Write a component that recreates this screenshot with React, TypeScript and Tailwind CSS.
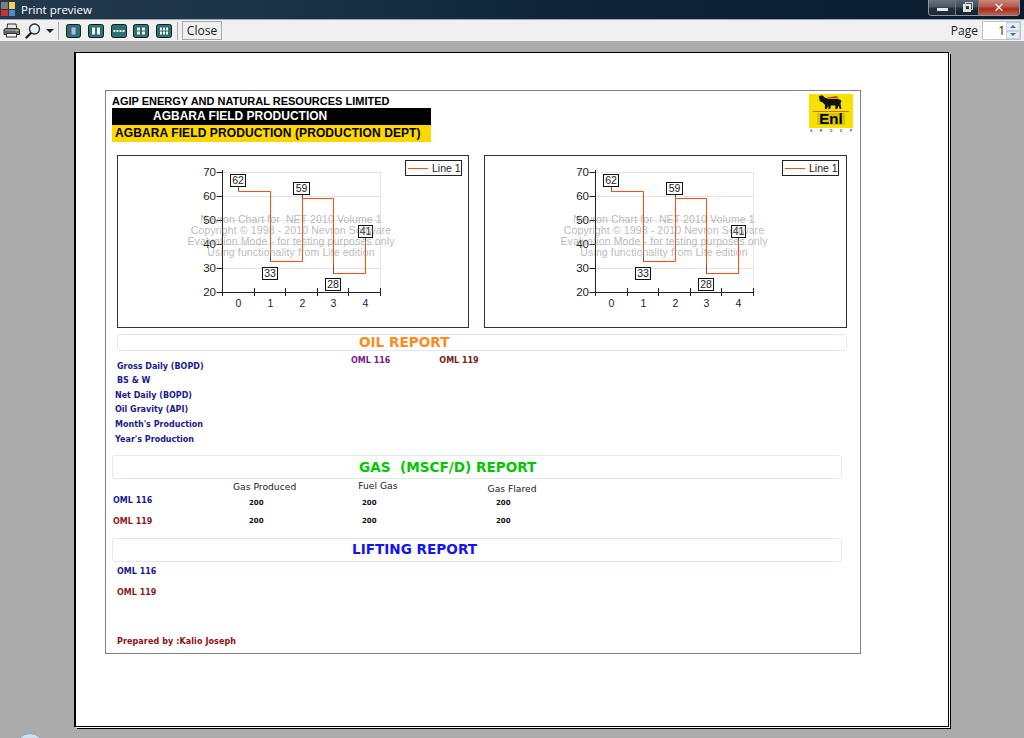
const YS = [70, 60, 50, 40, 30, 20];
const VALUES = [62, 33, 59, 28, 41];
// label box offset from the plot origin, in chart pixels
const BOXES = [
  { v: 62, x: 8.5, y: 2, w: 15 },
  { v: 33, x: 40.5, y: 95, w: 15 },
  { v: 59, x: 71.5, y: 10, w: 16 },
  { v: 28, x: 103.5, y: 106, w: 15 },
  { v: 41, x: 136.5, y: 53, w: 14 },
];

function yOf(v: number) {
  return Math.round(16 + (70 - v) * 2.4) + 0.5;
}

function Chart({ x0, width, legendX }: { x0: number; width: number; legendX: number }) {
  const xs = VALUES.map((_, i) => Math.round(x0 + 16.4 + i * 31.6) + 0.5);
  let d = `M${xs[0]} ${yOf(VALUES[0])}`;
  for (let i = 1; i < VALUES.length; i++) {
    d += ` H${xs[i]} V${yOf(VALUES[i])}`;
  }
  const left = x0 + 0.5;
  const right = x0 + 158.5;
  return (
    <div className="h-[173px] border border-[#333] bg-white" style={{ width: width + 2 }}>
      <svg width={width} height={171} className="block font-['Liberation_Sans']">
        {[70, 60, 50, 40, 30].map((v) => (
          <line key={v} x1={left} x2={right} y1={yOf(v)} y2={yOf(v)} stroke="#e4e4e4" />
        ))}
        <line x1={right} x2={right} y1={16} y2={136} stroke="#e4e4e4" />
        <path d={d} fill="none" stroke="#ff4a10" strokeWidth="1" />
        {xs.map((x, i) => (
          <line key={i} x1={x} x2={x} y1={yOf(VALUES[i]) - 8} y2={yOf(VALUES[i])} stroke="#555" />
        ))}
        <line x1={left} x2={left} y1={14} y2={136} stroke="#222" />
        <line x1={left} x2={right} y1={136.5} y2={136.5} stroke="#222" />
        {YS.map((v) => (
          <g key={v}>
            <line x1={left - 6} x2={left} y1={yOf(v)} y2={yOf(v)} stroke="#222" />
            <text x={x0 - 6} y={yOf(v) + 3} textAnchor="end" fontSize="11.5" fill="#222">
              {v}
            </text>
          </g>
        ))}
        {[0, 1, 2, 3, 4, 5].map((i) => (
          <line key={i} x1={Math.round(x0 + i * 31.6) + 0.5} x2={Math.round(x0 + i * 31.6) + 0.5} y1={132} y2={140} stroke="#222" />
        ))}
        {xs.map((x, i) => (
          <text key={i} x={x} y={151} textAnchor="middle" fontSize="10.5" fill="#224">
            {i}
          </text>
        ))}
        {BOXES.map((b) => (
          <g key={b.v}>
            <rect x={x0 + b.x} y={16.5 + b.y} width={b.w} height={12} fill="#fff" stroke="#111" />
            <text x={x0 + b.x + b.w / 2} y={16 + b.y + 10} textAnchor="middle" fontSize="10.5" fill="#222">
              {b.v}
            </text>
          </g>
        ))}
        <g fill="#8c8c8c" fillOpacity="0.62" fontSize="10.5" textAnchor="middle" letterSpacing="0.12">
          <text x={x0 + 69} y={67}>Nevron Chart for .NET 2010 Volume 1</text>
          <text x={x0 + 69} y={78}>Copyright © 1998 - 2010 Nevron Software</text>
          <text x={x0 + 69} y={89}>Evaluation Mode - for testing purposes only</text>
          <text x={x0 + 69} y={100}>Using functionality from Lite edition</text>
        </g>
        <rect x={legendX + 0.5} y={4.5} width={56} height={15} fill="#fff" stroke="#222" />
        <line x1={legendX + 3} x2={legendX + 23} y1={12.5} y2={12.5} stroke="#ff4a10" />
        <text x={legendX + 27} y={16} fontSize="10.5" fill="#222">
          Line 1
        </text>
      </svg>
    </div>
  );
}

function EniLogo() {
  return (
    <div className="w-[44px]">
      <div className="flex h-[34px] flex-col items-center bg-[#f6e200]">
        <svg width="26" height="16" viewBox="0 0 30 18" className="mt-[1px]">
          <path
            d="M1 1 L5 0 L8 3 L12 4 L23 4 L27 6 L26 10 L27 16 L25 16 L24 12 L22 16 L20 16 L20 12 L15 12 L14 16 L12 16 L12 12 L10 16 L8 16 L8 11 L5 8 L2 7 Z"
            fill="#111"
          />
          <path d="M10 3 L21 1 L24 3 L12 3.5 Z" fill="#d8352a" />
        </svg>
        <div className="h-px w-[36px] bg-[#d8682a]" />
        <div className="mt-[1px] bg-[#d4c40c] px-[2px] font-['Liberation_Sans'] text-[15px] leading-[12px] font-bold text-black">
          Enl
        </div>
      </div>
      <div className="mt-[1px] flex justify-between px-px font-['Liberation_Sans'] text-[3px] leading-[5px] font-bold text-[#333]">
        <span>G</span>
        <span>R</span>
        <span>O</span>
        <span>U</span>
        <span>P</span>
      </div>
    </div>
  );
}

function PageIcon({ cols, rows, w = 16 }: { cols: number; rows: number; w?: number }) {
  const cells = [];
  const cw = cols > 2 ? 2 : cols === 2 ? 3 : 4;
  const ch = rows > 1 ? 3 : cols > 2 ? 2 : 7;
  const gap = cols > 2 ? 1 : 2;
  const totalW = cols * cw + (cols - 1) * gap;
  const totalH = rows * ch + (rows - 1);
  for (let r = 0; r < rows; r++) {
    for (let c = 0; c < cols; c++) {
      cells.push(
        <rect
          key={`${r}-${c}`}
          x={(w - totalW) / 2 + c * (cw + gap)}
          y={(14 - totalH) / 2 + r * (ch + 1)}
          width={cw}
          height={ch}
          fill={cols === 1 ? "#b9b6e6" : "#f2f2f2"}
        />,
      );
    }
  }
  return (
    <svg width={w} height={14} viewBox={`0 0 ${w} 14`} className="block">
      <rect x="0.5" y="0.5" width={w - 1} height="13" rx="2" fill="#2e6f70" stroke="#14201f" />
      {cells}
    </svg>
  );
}

function PrinterIcon() {
  return (
    <svg width="17" height="15" viewBox="0 0 17 15" className="block">
      <path d="M4.5 1 H13 L14 6 H4 Z" fill="#e8e8e8" stroke="#333" />
      <path d="M1 7 Q1 5.5 3 5.5 H14.5 Q16.5 5.5 16.5 7.5 V11.5 H1 Z" fill="#8a8a8a" stroke="#2c2c2c" />
      <path d="M1.5 9 H16" stroke="#444" />
      <rect x="3.5" y="10.5" width="10" height="3.5" fill="#f4f4f4" stroke="#333" />
      <rect x="12.5" y="7" width="2" height="1.2" fill="#e8d44a" />
    </svg>
  );
}

function MagnifierIcon() {
  return (
    <svg width="16" height="16" viewBox="0 0 16 16" className="block">
      <path d="M6 10 L1.5 14.5" stroke="#222" strokeWidth="2.4" strokeLinecap="round" />
      <circle cx="9.5" cy="6" r="5" fill="#dff3f8" stroke="#2a2a2a" strokeWidth="1.3" />
      <path d="M7 4.5 Q8.5 2.8 10.5 3.2" stroke="#fff" strokeWidth="1.2" fill="none" />
    </svg>
  );
}

function Panel({ className, children }: { className: string; children: React.ReactNode }) {
  return (
    <div className={`flex items-center rounded-[3px] border border-[#e3e9f1] bg-white font-['DejaVu_Sans'] text-[13.6px] font-bold ${className}`}>
      {children}
    </div>
  );
}

const label = "font-['DejaVu_Sans'] text-[8px] leading-none font-bold whitespace-nowrap";
const head = "font-['DejaVu_Sans'] text-[9.2px] leading-none whitespace-nowrap text-[#222]";
const num = "font-['DejaVu_Sans'] text-[7px] leading-[8px] font-bold text-[#111]";

export default function App() {
  return (
    <div className="relative flex h-[738px] w-[1024px] flex-col overflow-hidden bg-[#ababab] font-['Liberation_Sans']">
      {/* title bar */}
      <div className="flex h-[19px] shrink-0 items-start bg-[linear-gradient(90deg,#24394e_0%,#1c3448_25%,#0f2438_55%,#0a1c2e_100%)]">
        <div className="mt-[2px] ml-[1px] grid h-[14px] w-[14px] grid-cols-2 grid-rows-2 gap-px">
          <div className="bg-[#7d7d7d]" />
          <div className="bg-[#f2cf55]" />
          <div className="bg-[#c8352c]" />
          <div className="bg-[#4f87d6]" />
        </div>
        <span className="mt-[2px] ml-[6px] font-['Open_Sans'] text-[11.5px] leading-[16px] text-white">Print preview</span>
        <div className="mr-[4px] ml-auto flex h-[16px] w-[92px] overflow-hidden rounded-b-[4px] border-x border-b border-[#8b98a5]">
          <div className="flex w-[26px] items-center justify-center bg-[linear-gradient(180deg,#67727e_0%,#4a5663_45%,#26323f_55%,#1b2836_100%)]">
            <div className="mt-[3px] h-[3px] w-[11px] bg-[#e8e8e8]" />
          </div>
          <div className="flex w-[24px] items-center justify-center border-x border-[#6e7a86] bg-[linear-gradient(180deg,#5a6672_0%,#3f4c59_45%,#1f2c3a_55%,#17242f_100%)]">
            <div className="relative h-[8px] w-[8px] border-2 border-[#e4e4e4]">
              <div className="absolute -top-[4px] -right-[4px] h-[8px] w-[8px] border border-[#cfcfcf]" />
            </div>
          </div>
          <div className="flex flex-1 items-center justify-center bg-[linear-gradient(180deg,#c98980_0%,#b4574c_45%,#a42c18_60%,#c0604f_100%)]">
            <span className="font-['DejaVu_Sans'] text-[13px] leading-none font-bold text-[#eeeeee]">✕</span>
          </div>
        </div>
      </div>

      {/* toolbar */}
      <div className="flex h-[22px] shrink-0 items-center border-t border-[#9aa7b3] bg-[#f0f0f0] pr-[3px] pl-[3px] text-[#1a1a1a]">
        <PrinterIcon />
        <div className="ml-[5px]">
          <MagnifierIcon />
        </div>
        <div className="mt-px ml-[5px] h-0 w-0 border-x-[4px] border-t-[4px] border-x-transparent border-t-[#222]" />
        <div className="ml-[4px] h-[18px] w-px bg-[#a8a8a8]" />
        <div className="ml-[7px]">
          <PageIcon cols={1} rows={1} w={15} />
        </div>
        <div className="ml-[7px]">
          <PageIcon cols={2} rows={1} />
        </div>
        <div className="ml-[7px]">
          <PageIcon cols={4} rows={1} />
        </div>
        <div className="ml-[6px]">
          <PageIcon cols={2} rows={2} />
        </div>
        <div className="ml-[7px]">
          <PageIcon cols={3} rows={2} />
        </div>
        <div className="ml-[5px] h-[18px] w-px bg-[#a8a8a8]" />
        <div className="ml-[4px] flex h-[19px] w-[40px] items-center justify-center border border-[#a9a9a9] font-['Open_Sans'] text-[12px]">
          Close
        </div>
        <span className="ml-auto font-['Open_Sans'] text-[12px]">Page</span>
        <div className="ml-[4px] flex h-[19px] w-[39px] border border-[#c4c4c4] bg-white">
          <span className="flex-1 pr-[1px] text-right font-['Open_Sans'] text-[12px] leading-[17px]">1</span>
          <div className="flex w-[14px] flex-col">
            <div className="flex flex-1 items-center justify-center border border-[#c9d3df] bg-[#e6edf6]">
              <div className="h-0 w-0 border-x-[3px] border-b-[3px] border-x-transparent border-b-[#4a6fa5]" />
            </div>
            <div className="flex flex-1 items-center justify-center border border-[#c9d3df] bg-[#e6edf6]">
              <div className="h-0 w-0 border-x-[3px] border-t-[3px] border-x-transparent border-t-[#4a6fa5]" />
            </div>
          </div>
        </div>
      </div>

      {/* preview area */}
      <div className="flex-1 pt-[11px] pl-[75px]">
        <div className="h-[675px] w-[874px] border border-black bg-white pt-[37px] pl-[29px] shadow-[1px_1px_0_#fff,2px_2px_0_#000,-1px_0_0_#000]">
          <div className="h-[564px] w-[756px] border border-[#808080] bg-white">
            {/* header */}
            <div className="flex h-[64px] items-start justify-between pt-[3px] pr-[7px] pl-[6px]">
              <div className="w-[319px]">
                <div className="h-[14px] text-[11px] leading-[14px] font-bold text-black">
                  AGIP ENERGY AND NATURAL RESOURCES LIMITED
                </div>
                <div className="h-[17px] bg-black pl-[41px] text-[12px] leading-[17px] font-bold text-white">
                  AGBARA FIELD PRODUCTION
                </div>
                <div className="h-[17px] bg-[#ffd700] pl-[3px] text-[12px] leading-[17px] font-bold tracking-[0.1px] whitespace-nowrap text-black">
                  AGBARA FIELD PRODUCTION (PRODUCTION DEPT)
                </div>
              </div>
              <EniLogo />
            </div>

            {/* charts */}
            <div className="flex gap-[15px] pl-[11px]">
              <Chart x0={104} width={350} legendX={287} />
              <Chart x0={110} width={361} legendX={297} />
            </div>

            {/* oil */}
            <Panel className="mt-[6px] ml-[11px] h-[17px] w-[730px] pl-[241px] text-[#ff8a1e]">
              OIL REPORT
            </Panel>
            <div className="flex h-[104px]">
              <div className="flex w-[234px] flex-col pl-[9px]">
                <span className={`mt-[12px] pl-[2px] text-[#1a1a8c] ${label}`}>Gross Daily (BOPD)</span>
                <span className={`mt-[6px] pl-[2px] text-[#1a1a8c] ${label}`}>BS &amp; W</span>
                <span className={`mt-[7px] text-[#1a1a8c] ${label}`}>Net Daily (BOPD)</span>
                <span className={`mt-[6px] text-[#1a1a8c] ${label}`}>Oil Gravity (API)</span>
                <span className={`mt-[7px] text-[#1a1a8c] ${label}`}>Month's Production</span>
                <span className={`mt-[7px] text-[#1a1a8c] ${label}`}>Year's Production</span>
              </div>
              <div className="flex pt-[6px] pl-[11px]">
                <span className={`text-[#7a1a8c] ${label}`}>OML 116</span>
                <span className={`ml-[49px] text-[#7a1a1a] ${label}`}>OML 119</span>
              </div>
            </div>

            {/* gas */}
            <Panel className="ml-[6px] h-[24px] w-[730px] pl-[246px] whitespace-pre text-[#00c800]">
              GAS  (MSCF/D) REPORT
            </Panel>
            <div className="h-[59px] pl-[7px]">
              <div className="flex h-[20px] items-start">
                <span className={`mt-[3px] ml-[120px] ${head}`}>Gas Produced</span>
                <span className={`mt-[2px] ml-[62px] ${head}`}>Fuel Gas</span>
                <span className={`mt-[5px] ml-[90px] ${head}`}>Gas Flared</span>
              </div>
              <div className="flex h-[19px] items-start">
                <span className={`mt-[-2px] w-[136px] text-[#1a1a8c] ${label}`}>OML 116</span>
                <span className={`w-[113px] ${num}`}>200</span>
                <span className={`w-[134px] ${num}`}>200</span>
                <span className={num}>200</span>
              </div>
              <div className="flex items-start">
                <span className={`w-[136px] text-[#8c1a1a] ${label}`}>OML 119</span>
                <span className={`mt-[-1px] w-[113px] ${num}`}>200</span>
                <span className={`mt-[-1px] w-[134px] ${num}`}>200</span>
                <span className={`mt-[-1px] ${num}`}>200</span>
              </div>
            </div>

            {/* lifting */}
            <Panel className="ml-[6px] h-[24px] w-[730px] pb-[2px] pl-[239px] text-[#1414f0]">
              LIFTING REPORT
            </Panel>
            <div className="flex flex-col pl-[11px]">
              <span className={`mt-[6px] text-[#1a1a8c] ${label}`}>OML 116</span>
              <span className={`mt-[13px] text-[#8c1a1a] ${label}`}>OML 119</span>
              <span className={`mt-[41px] text-[#8c1010] ${label} tracking-[0.1px]`}>Prepared by :Kalio Joseph</span>
            </div>
          </div>
        </div>
      </div>

      {/* taskbar orb peeking in at the bottom edge */}
      <div className="absolute top-[733px] left-[15px] h-[30px] w-[30px] rounded-full border border-[#7fa3bf] bg-[#cfe0ec]" />
    </div>
  );
}
